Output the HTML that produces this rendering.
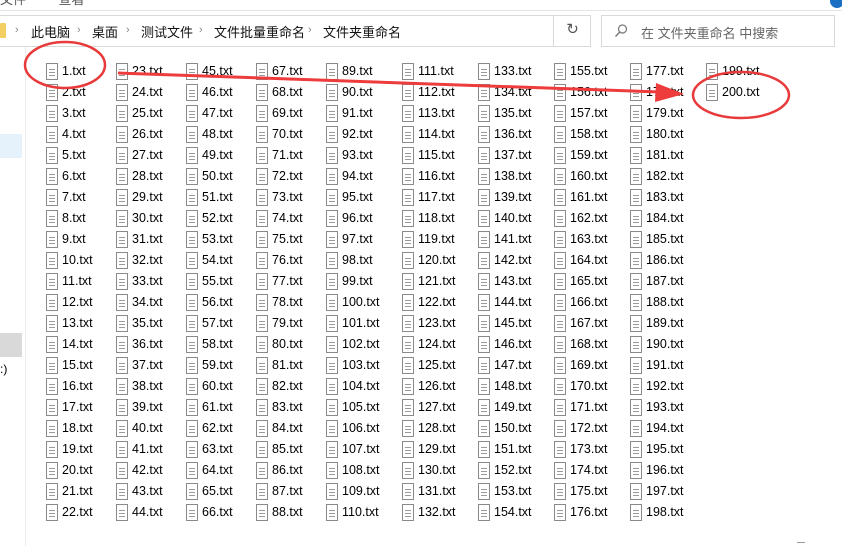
<!DOCTYPE html>
<html><head><meta charset="utf-8"><style>
*{margin:0;padding:0;box-sizing:border-box}
body{width:842px;height:546px;overflow:hidden;background:#fff;position:relative;font-family:"Liberation Sans","Noto Sans CJK SC",sans-serif;font-size:12.5px;color:#000}
.abs{position:absolute}
.col{position:absolute;top:61px}
.col div{height:21px;line-height:20px;padding-left:16px;position:relative;white-space:nowrap}
.col div:before{content:"";position:absolute;left:0;top:2px;width:10px;height:15px;border:1px solid #8a8a8a;background:repeating-linear-gradient(#fff 0 2px,#9a9a9a 2px 3px) 2px 3px/6px 10px no-repeat,#fff}
.bc{position:absolute;top:22px;font-size:13px;color:#111}
.ch{position:absolute;top:24px;color:#888;font-size:11px}
</style></head><body>
<div class="abs" style="left:0;top:-11px;font-size:13px;color:#555">文件&nbsp;&nbsp;&nbsp;&nbsp;&nbsp;&nbsp;&nbsp;&nbsp;&nbsp;查看</div>
<div class="abs" style="left:0;top:10px;width:842px;height:1px;background:#e5e5e5"></div>
<div class="abs" style="left:-1px;top:15px;width:592px;height:32px;border:1px solid #d9d9d9"></div>
<div class="abs" style="left:553px;top:15px;width:38px;height:32px;border-left:1px solid #d9d9d9;text-align:center;line-height:30px;color:#555;font-size:15px">↻</div>
<div class="abs" style="left:0;top:23px;width:6px;height:15px;background:#f3cf62;border-radius:1px"></div>
<span class="ch" style="left:15px">›</span><span class="bc" style="left:31px">此电脑</span>
<span class="ch" style="left:77px">›</span><span class="bc" style="left:92px">桌面</span>
<span class="ch" style="left:126px">›</span><span class="bc" style="left:141px">测试文件</span>
<span class="ch" style="left:199px">›</span><span class="bc" style="left:214px">文件批量重命名</span>
<span class="ch" style="left:308px">›</span><span class="bc" style="left:323px">文件夹重命名</span>
<div class="abs" style="left:601px;top:15px;width:234px;height:32px;border:1px solid #d9d9d9"></div>
<svg class="abs" style="left:614px;top:24px" width="14" height="14"><circle cx="8.5" cy="5" r="4" fill="none" stroke="#777" stroke-width="1.2"/><line x1="5.8" y1="8" x2="1.5" y2="12.5" stroke="#777" stroke-width="1.4"/></svg>
<div class="abs" style="left:641px;top:23px;color:#666;font-size:13px">在 文件夹重命名 中搜索</div>
<div class="abs" style="left:830px;top:-6px;width:14px;height:14px;border-radius:50%;background:#1b6fc2"></div>
<div class="abs" style="left:25px;top:47px;width:1px;height:499px;background:#ececec"></div>
<div class="abs" style="left:0;top:134px;width:22px;height:24px;background:#e5f1fb"></div>
<div class="abs" style="left:0;top:333px;width:22px;height:24px;background:#d9d9d9"></div>
<div class="abs" style="left:0;top:362px;font-size:12px">:)</div>
<div class="abs" style="left:797px;top:542px;width:8px;height:1px;background:#999"></div>

<div class="col" style="left:46px"><div>1.txt</div><div>2.txt</div><div>3.txt</div><div>4.txt</div><div>5.txt</div><div>6.txt</div><div>7.txt</div><div>8.txt</div><div>9.txt</div><div>10.txt</div><div>11.txt</div><div>12.txt</div><div>13.txt</div><div>14.txt</div><div>15.txt</div><div>16.txt</div><div>17.txt</div><div>18.txt</div><div>19.txt</div><div>20.txt</div><div>21.txt</div><div>22.txt</div></div>
<div class="col" style="left:116px"><div>23.txt</div><div>24.txt</div><div>25.txt</div><div>26.txt</div><div>27.txt</div><div>28.txt</div><div>29.txt</div><div>30.txt</div><div>31.txt</div><div>32.txt</div><div>33.txt</div><div>34.txt</div><div>35.txt</div><div>36.txt</div><div>37.txt</div><div>38.txt</div><div>39.txt</div><div>40.txt</div><div>41.txt</div><div>42.txt</div><div>43.txt</div><div>44.txt</div></div>
<div class="col" style="left:186px"><div>45.txt</div><div>46.txt</div><div>47.txt</div><div>48.txt</div><div>49.txt</div><div>50.txt</div><div>51.txt</div><div>52.txt</div><div>53.txt</div><div>54.txt</div><div>55.txt</div><div>56.txt</div><div>57.txt</div><div>58.txt</div><div>59.txt</div><div>60.txt</div><div>61.txt</div><div>62.txt</div><div>63.txt</div><div>64.txt</div><div>65.txt</div><div>66.txt</div></div>
<div class="col" style="left:256px"><div>67.txt</div><div>68.txt</div><div>69.txt</div><div>70.txt</div><div>71.txt</div><div>72.txt</div><div>73.txt</div><div>74.txt</div><div>75.txt</div><div>76.txt</div><div>77.txt</div><div>78.txt</div><div>79.txt</div><div>80.txt</div><div>81.txt</div><div>82.txt</div><div>83.txt</div><div>84.txt</div><div>85.txt</div><div>86.txt</div><div>87.txt</div><div>88.txt</div></div>
<div class="col" style="left:326px"><div>89.txt</div><div>90.txt</div><div>91.txt</div><div>92.txt</div><div>93.txt</div><div>94.txt</div><div>95.txt</div><div>96.txt</div><div>97.txt</div><div>98.txt</div><div>99.txt</div><div>100.txt</div><div>101.txt</div><div>102.txt</div><div>103.txt</div><div>104.txt</div><div>105.txt</div><div>106.txt</div><div>107.txt</div><div>108.txt</div><div>109.txt</div><div>110.txt</div></div>
<div class="col" style="left:402px"><div>111.txt</div><div>112.txt</div><div>113.txt</div><div>114.txt</div><div>115.txt</div><div>116.txt</div><div>117.txt</div><div>118.txt</div><div>119.txt</div><div>120.txt</div><div>121.txt</div><div>122.txt</div><div>123.txt</div><div>124.txt</div><div>125.txt</div><div>126.txt</div><div>127.txt</div><div>128.txt</div><div>129.txt</div><div>130.txt</div><div>131.txt</div><div>132.txt</div></div>
<div class="col" style="left:478px"><div>133.txt</div><div>134.txt</div><div>135.txt</div><div>136.txt</div><div>137.txt</div><div>138.txt</div><div>139.txt</div><div>140.txt</div><div>141.txt</div><div>142.txt</div><div>143.txt</div><div>144.txt</div><div>145.txt</div><div>146.txt</div><div>147.txt</div><div>148.txt</div><div>149.txt</div><div>150.txt</div><div>151.txt</div><div>152.txt</div><div>153.txt</div><div>154.txt</div></div>
<div class="col" style="left:554px"><div>155.txt</div><div>156.txt</div><div>157.txt</div><div>158.txt</div><div>159.txt</div><div>160.txt</div><div>161.txt</div><div>162.txt</div><div>163.txt</div><div>164.txt</div><div>165.txt</div><div>166.txt</div><div>167.txt</div><div>168.txt</div><div>169.txt</div><div>170.txt</div><div>171.txt</div><div>172.txt</div><div>173.txt</div><div>174.txt</div><div>175.txt</div><div>176.txt</div></div>
<div class="col" style="left:630px"><div>177.txt</div><div>178.txt</div><div>179.txt</div><div>180.txt</div><div>181.txt</div><div>182.txt</div><div>183.txt</div><div>184.txt</div><div>185.txt</div><div>186.txt</div><div>187.txt</div><div>188.txt</div><div>189.txt</div><div>190.txt</div><div>191.txt</div><div>192.txt</div><div>193.txt</div><div>194.txt</div><div>195.txt</div><div>196.txt</div><div>197.txt</div><div>198.txt</div></div>
<div class="col" style="left:706px"><div>199.txt</div><div>200.txt</div></div>

<svg class="abs" style="left:0;top:0" width="842" height="546">
<ellipse cx="65" cy="65" rx="40" ry="23" fill="none" stroke="#e83a3a" stroke-width="2.5"/>
<ellipse cx="741" cy="95" rx="48" ry="23" fill="none" stroke="#e83a3a" stroke-width="2.5"/>
<line x1="118" y1="73" x2="660" y2="92" stroke="#ee3b3b" stroke-width="3"/>
<polygon points="656,83 684,94 655,102" fill="#ee3b3b"/>
</svg>
</body></html>
